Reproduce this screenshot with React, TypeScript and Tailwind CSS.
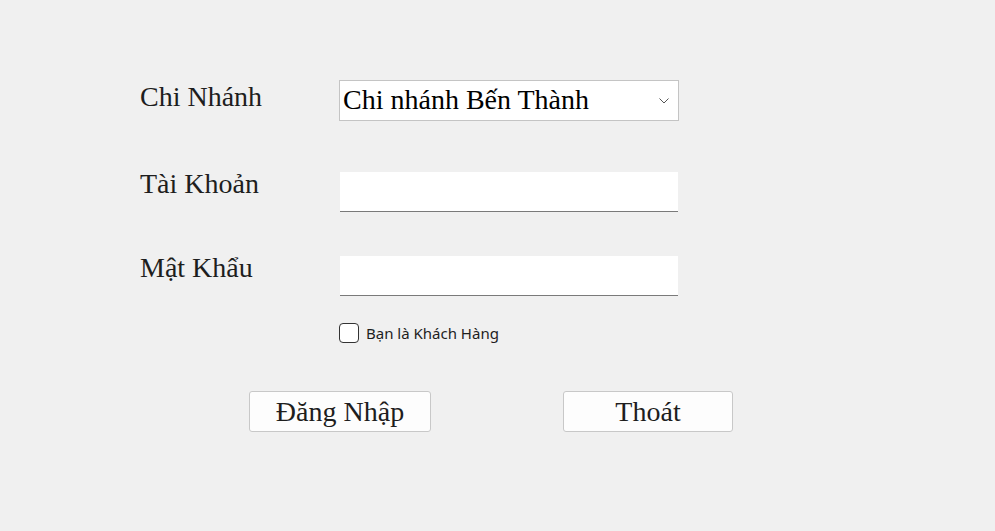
import { useState } from "react";

export default function App() {
  const [branch, setBranch] = useState("Chi nhánh Bến Thành");
  const [user, setUser] = useState("");
  const [pass, setPass] = useState("");
  const [guest, setGuest] = useState(false);

  const serif = "font-['Liberation_Serif','Times_New_Roman',serif] text-[28px] leading-[32px] text-[#1e1e1e]";

  return (
    <div className="w-[995px] h-[531px] bg-[#f0f0f0] overflow-hidden">
      <div className="pl-[140px] pt-[80px]">
        {/* chi nhánh */}
        <div className="flex items-start">
          <div className={`w-[199px] mt-[1px] ${serif}`}>Chi Nhánh</div>
          <div className="relative w-[340px] h-[41px] bg-white border border-[#c4c4c4] flex items-center">
            <span className={`pl-[3px] -mt-[1px] ${serif} text-black`}>{branch}</span>
            <select
              value={branch}
              onChange={(e) => setBranch(e.target.value)}
              className="absolute inset-0 opacity-0"
            >
              <option>Chi nhánh Bến Thành</option>
              <option>Chi nhánh Tân Định</option>
            </select>
            <svg
              className="absolute right-[9px] top-[17px] pointer-events-none"
              width="10"
              height="6"
              viewBox="0 0 10 6"
            >
              <path d="M0.5 0.5 L5 5 L9.5 0.5" fill="none" stroke="#555" strokeWidth="1" />
            </svg>
          </div>
        </div>

        {/* tài khoản */}
        <div className="flex items-start mt-[51px]">
          <div className={`w-[200px] -mt-[4px] ${serif}`}>Tài Khoản</div>
          <input
            value={user}
            onChange={(e) => setUser(e.target.value)}
            className={`w-[338px] h-[40px] bg-white border-b border-[#7a7a7a] outline-none px-1 ${serif}`}
          />
        </div>

        {/* mật khẩu */}
        <div className="flex items-start mt-[44px]">
          <div className={`w-[200px] -mt-[4px] ${serif}`}>Mật Khẩu</div>
          <input
            type="password"
            value={pass}
            onChange={(e) => setPass(e.target.value)}
            className={`w-[338px] h-[40px] bg-white border-b border-[#7a7a7a] outline-none px-1 ${serif}`}
          />
        </div>

        <label className="flex items-center ml-[199px] mt-[27px] h-[20px] gap-[7px] cursor-pointer">
          <input
            type="checkbox"
            checked={guest}
            onChange={(e) => setGuest(e.target.checked)}
            className="appearance-none w-[20px] h-[20px] rounded-[4px] border border-[#333] bg-white"
          />
          <span className="font-['Noto_Sans',sans-serif] text-[15px] text-[#1e1e1e]">Bạn là Khách Hàng</span>
        </label>

        <div className="flex mt-[48px] ml-[109px]">
          <button className={`w-[182px] h-[41px] pt-[1px] bg-[#fdfdfd] border border-[#c8c8c8] rounded-[3px] ${serif}`}>
            Đăng Nhập
          </button>
          <button className={`w-[170px] h-[41px] pt-[1px] ml-[132px] bg-[#fdfdfd] border border-[#c8c8c8] rounded-[3px] ${serif}`}>
            Thoát
          </button>
        </div>
      </div>
    </div>
  );
}
